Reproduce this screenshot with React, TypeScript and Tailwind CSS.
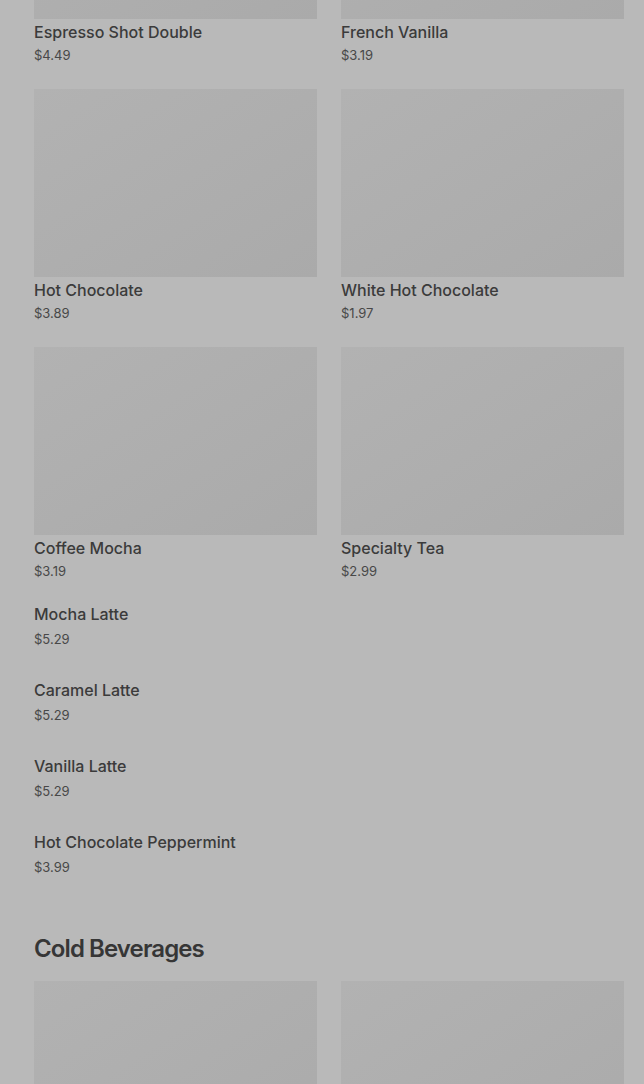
import React from 'react';

interface Item {
  name: string;
  price: string;
}

const hotWithImages: Item[] = [
  { name: 'Espresso Shot Double', price: '$4.49' },
  { name: 'French Vanilla', price: '$3.19' },
  { name: 'Hot Chocolate', price: '$3.89' },
  { name: 'White Hot Chocolate', price: '$1.97' },
  { name: 'Coffee Mocha', price: '$3.19' },
  { name: 'Specialty Tea', price: '$2.99' },
];

const hotList: Item[] = [
  { name: 'Mocha Latte', price: '$5.29' },
  { name: 'Caramel Latte', price: '$5.29' },
  { name: 'Vanilla Latte', price: '$5.29' },
  { name: 'Hot Chocolate Peppermint', price: '$3.99' },
];

const ImageCard: React.FC<{ item?: Item }> = ({ item }) => (
  <div className="flex flex-col">
    <div className="h-[188px] w-full bg-gradient-to-br from-[#b2b2b2] to-[#aaaaaa]"></div>
    {item && (
      <>
        <p className="mt-[1px] text-[16px] leading-6 font-medium text-[#3b3b3b]">{item.name}</p>
        <p className="mt-[1px] text-[13px] leading-5 text-[#484848]">{item.price}</p>
      </>
    )}
  </div>
);

export default function App() {
  return (
    <div
      className="min-h-screen overflow-hidden bg-[#b9b9b9]"
      style={{ fontFamily: 'Inter, "Liberation Sans", sans-serif' }}
    >
      <div className="mt-[-169px] pl-[34px] pr-[20px]">
        {/* hot beverages with pictures */}
        <div className="grid grid-cols-2 gap-x-6 gap-y-6">
          {hotWithImages.map((item) => (
            <ImageCard key={item.name} item={item} />
          ))}
        </div>

        {/* items without a picture */}
        <div className="mt-[21px] flex flex-col">
          {hotList.map((item) => (
            <div key={item.name} className="h-[76px]">
              <p className="text-[16px] leading-6 font-medium text-[#3b3b3b]">{item.name}</p>
              <p className="mt-[3px] text-[13px] leading-5 text-[#484848]">{item.price}</p>
            </div>
          ))}
        </div>

        <h2 className="mt-[27px] text-[24px] leading-8 font-semibold tracking-[-0.9px] text-[#363636]">
          Cold Beverages
        </h2>

        <div className="mt-[16px] grid grid-cols-2 gap-x-6 gap-y-6">
          <ImageCard />
          <ImageCard />
        </div>
      </div>
    </div>
  );
}
